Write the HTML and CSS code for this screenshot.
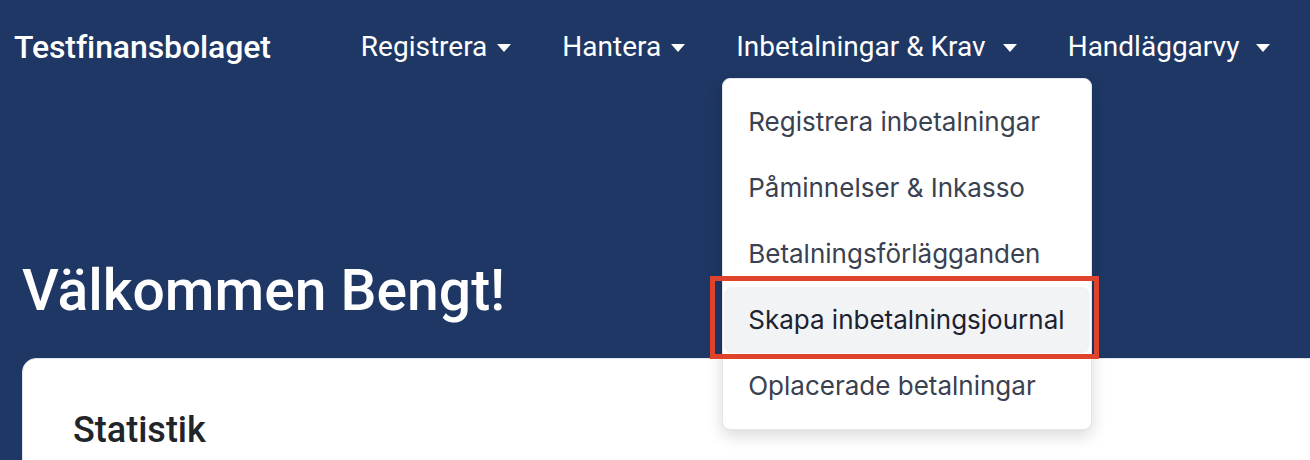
FILE: index.html
```html
<!DOCTYPE html>
<html lang="sv">
<head>
  <meta charset="UTF-8" />
  <meta name="viewport" content="width=device-width, initial-scale=1" />
  <title>Testfinansbolaget</title>
  <link rel="stylesheet" href="styles.css">
</head>
<body>
  <nav class="navbar">
    <a class="brand" href="#">Testfinansbolaget</a>
    <ul class="nav">
      <li class="nav-item"><a class="nav-link" href="#">Registrera<span class="caret"></span></a></li>
      <li class="nav-item"><a class="nav-link" href="#">Hantera<span class="caret"></span></a></li>
      <li class="nav-item open">
        <a class="nav-link wide" href="#">Inbetalningar &amp; Krav<span class="caret"></span></a>
        <div class="dropdown-menu">
          <a class="dropdown-item" href="#">Registrera inbetalningar</a>
          <a class="dropdown-item" href="#">Påminnelser &amp; Inkasso</a>
          <a class="dropdown-item" href="#">Betalningsförlägganden</a>
          <a class="dropdown-item active" href="#">Skapa inbetalningsjournal</a>
          <a class="dropdown-item" href="#">Oplacerade betalningar</a>
        </div>
      </li>
      <li class="nav-item"><a class="nav-link wide" href="#">Handläggarvy<span class="caret"></span></a></li>
    </ul>
  </nav>

  <main class="content">
    <h1 class="welcome">Välkommen Bengt!</h1>
    <section class="card">
      <h2 class="card-title">Statistik</h2>
    </section>
  </main>
</body>
</html>
```

FILE: styles.css
```css
/* Base */
body {
  margin: 0;
  font-family: Roboto, "Liberation Sans", sans-serif;
  background: #1e3764;
  color: #fff;
  overflow: hidden;
}
a {
  color: inherit;
  text-decoration: none;
}

/* Navbar */
.navbar {
  display: flex;
  align-items: center;
  padding: 26px 14px 0;
  height: 42px;
}
.brand {
  font-size: 32px;
  font-weight: 500;
  letter-spacing: -0.1px;
}
.nav {
  display: flex;
  gap: 51px;
  list-style: none;
  margin: 0 0 0 90px;
  padding: 0;
}
.nav-item {
  position: relative;
}
.nav-link {
  display: flex;
  align-items: center;
  font-size: 28px;
  line-height: 32px;
}
.caret {
  width: 0;
  height: 0;
  margin-left: 10px;
  margin-top: 2px;
  border-top: 8px solid #fff;
  border-left: 7px solid transparent;
  border-right: 7px solid transparent;
}
.nav-link.wide .caret {
  margin-left: 17px;
}

/* Dropdown */
.dropdown-menu {
  position: absolute;
  top: 47px;
  left: -14px;
  width: 368px;
  padding: 10px 0;
  background: #fff;
  border: 1px solid #e3e5e8;
  border-radius: 8px;
  box-shadow: 0 6px 16px rgba(0, 0, 0, 0.15);
  z-index: 10;
}
.dropdown-item {
  position: relative;
  display: block;
  height: 66px;
  line-height: 66px;
  padding: 0 24px;
  margin: 0 1px;
  border-radius: 8px;
  font-family: Inter, Roboto, sans-serif;
  font-size: 26px;
  color: #3a4150;
  white-space: nowrap;
}
.dropdown-item.active {
  background: #f2f3f5;
  color: #1c2230;
}
.dropdown-item.active::after {
  content: "";
  position: absolute;
  top: -11px;
  left: -14px;
  right: -9px;
  bottom: -6px;
  border: 5px solid #e0432b;
}

/* Main content */
.content {
  padding: 0 0 0 22px;
}
.welcome {
  margin: 0;
  padding-top: 190px;
  font-size: 57px;
  font-weight: 500;
  line-height: 66px;
}
.card {
  margin-top: 34px;
  margin-right: -40px;
  height: 200px;
  padding: 50px 50px 0;
  background: #fff;
  border: 1px solid #e0e3e8;
  border-radius: 14px;
  color: #212529;
}
.card-title {
  margin: 0;
  font-size: 36px;
  font-weight: 500;
}
```
